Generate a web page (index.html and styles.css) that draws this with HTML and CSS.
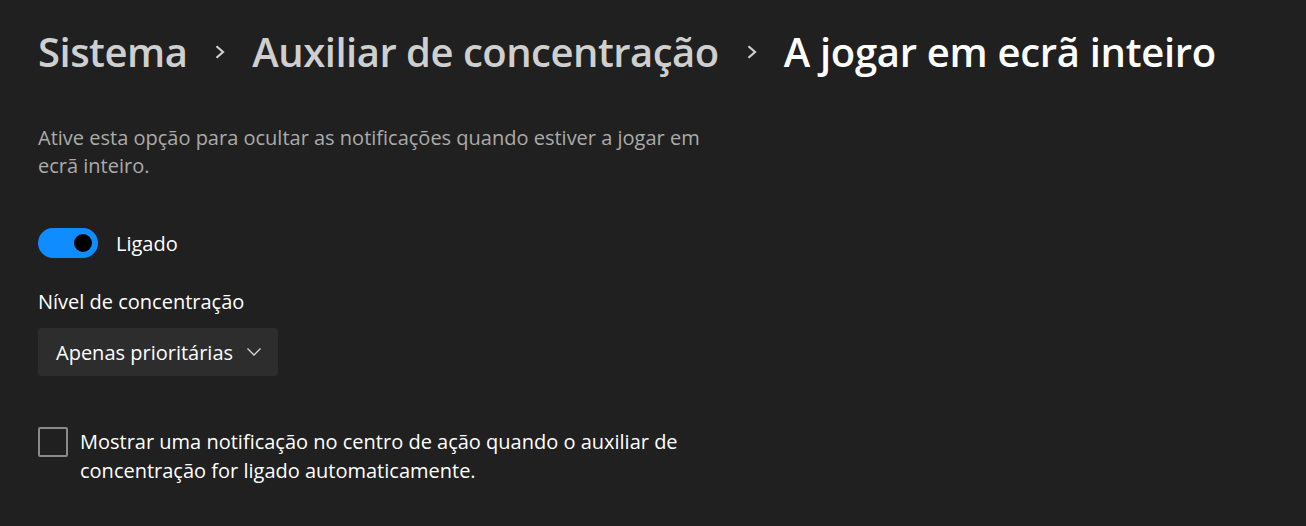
FILE: index.html
```html
<!DOCTYPE html>
<html lang="pt">
<head>
  <meta charset="UTF-8">
  <title>A jogar em ecrã inteiro</title>
  <link rel="stylesheet" href="styles.css">
</head>
<body>

  <div class="page">
    <h1 class="breadcrumb">
      <span class="crumb">Sistema</span>
      <svg class="sep" width="12" height="14" viewBox="0 0 12 14"><path d="M2.5 1.2 L9 7 L2.5 12.8" fill="none" stroke="#cfcfcf" stroke-width="2.2"/></svg>
      <span class="crumb">Auxiliar de concentração</span>
      <svg class="sep" width="12" height="14" viewBox="0 0 12 14"><path d="M2.5 1.2 L9 7 L2.5 12.8" fill="none" stroke="#cfcfcf" stroke-width="2.2"/></svg>
      <span class="crumb current">A jogar em ecrã inteiro</span>
    </h1>

    <p class="description">Ative esta opção para ocultar as notificações quando estiver a jogar em ecrã inteiro.</p>

    <div class="toggle-row">
      <div class="toggle"><div class="knob"></div></div>
      <span>Ligado</span>
    </div>

    <div class="field-label">Nível de concentração</div>
    <div class="dropdown">
      <span>Apenas prioritárias</span>
      <svg width="16" height="10" viewBox="0 0 16 10"><path d="M1.5 1.5 L8 8 L14.5 1.5" fill="none" stroke="#d8d8d8" stroke-width="1.3"/></svg>
    </div>

    <div class="check-row">
      <div class="checkbox"></div>
      <span>Mostrar uma notificação no centro de ação quando o auxiliar de concentração for ligado automaticamente.</span>
    </div>
  </div>

</body>
</html>
```

FILE: styles.css
```css
* {
  box-sizing: border-box;
}

body {
  margin: 0;
  background: #202020;
  font-family: 'Open Sans', 'Noto Sans', sans-serif;
  color: #ffffff;
}

.page {
  padding: 20px 38px;
}

.breadcrumb {
  display: flex;
  align-items: center;
  margin: 0;
  font-size: 40px;
  font-weight: 600;
  line-height: 64px;
  letter-spacing: -0.5px;
}

.crumb {
  color: #cfcfcf;
}

.crumb.current {
  color: #ffffff;
  letter-spacing: -0.3px;
}

.sep {
  margin: 0 26px 0 27px;
}

.description {
  margin: 40px 0 0;
  width: 680px;
  font-size: 20px;
  line-height: 28px;
  color: #ababab;
}

.toggle-row {
  display: flex;
  align-items: center;
  gap: 18px;
  margin-top: 48px;
  font-size: 20px;
}

.toggle {
  display: flex;
  align-items: center;
  justify-content: flex-end;
  width: 60px;
  height: 30px;
  padding-right: 6px;
  border-radius: 15px;
  background: #0f8cff;
}

.knob {
  width: 18px;
  height: 18px;
  border-radius: 50%;
  background: #000;
}

.field-label {
  margin-top: 30px;
  font-size: 20px;
  line-height: 28px;
}

.dropdown {
  display: flex;
  align-items: center;
  justify-content: space-between;
  width: 240px;
  height: 48px;
  margin-top: 12px;
  padding: 0 16px 0 18px;
  background: #2d2d2d;
  border-radius: 3px;
  font-size: 20px;
}

.check-row {
  display: flex;
  align-items: flex-start;
  gap: 12px;
  margin-top: 51px;
  width: 660px;
  font-size: 20px;
  line-height: 29px;
}

.checkbox {
  flex: none;
  width: 30px;
  height: 30px;
  border: 2px solid #8a8a8a;
  border-radius: 2px;
}
```
